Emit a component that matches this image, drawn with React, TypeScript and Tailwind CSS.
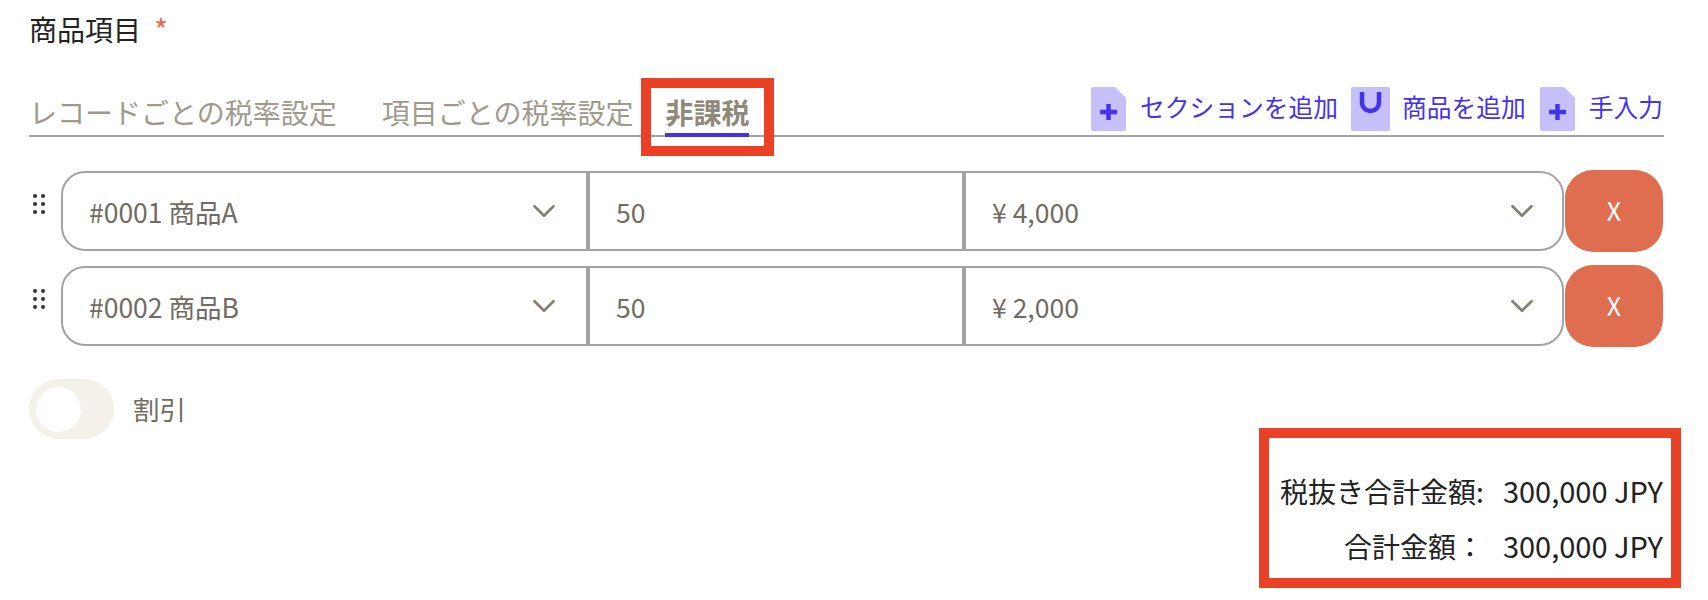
import { ChevronDown } from "lucide-react";

const FONT = "font-['Noto_Sans_CJK_JP','Noto_Sans',sans-serif]";

function FileIcon({ plus }: { plus?: boolean }) {
	if (plus) {
		return (
			<svg className="shrink-0" width="35" height="44" viewBox="0 0 35 44">
				<path d="M2 0H24L35 11V42a2 2 0 0 1-2 2H2a2 2 0 0 1-2-2V2a2 2 0 0 1 2-2Z" fill="#c5c0fa" />
				<path d="M17.500 17V33M9 25H26" stroke="#4433e8" strokeWidth="4.500" />
			</svg>
		);
	}
	return (
		<svg className="shrink-0" width="39" height="44" viewBox="0 0 39 44">
			<rect width="39" height="44" rx="2" fill="#c5c0fa" />
			<path d="M11 5V15.500a8.500 8.500 0 0 0 17 0V5" fill="none" stroke="#4433e8" strokeWidth="4.500" />
		</svg>
	);
}

function GripDots() {
	return (
		<div className="mt-[24px] grid h-[20px] w-[12px] grid-cols-2 gap-x-[4px] gap-y-[4px]">
			{[0, 1, 2, 3, 4, 5].map((i) => (
				<span className="h-[4px] w-[4px] rounded-full bg-[#333333]" key={i} />
			))}
		</div>
	);
}

function ItemRow({ name, qty, price }: { name: string; qty: string; price: string }) {
	return (
		<div className="flex h-[82px] items-start">
			<div className="w-[32px] pl-[4px]">
				<GripDots />
			</div>
			<div className="mt-[1px] flex h-[80px] w-[1503px] rounded-[24px] border-2 border-[#a3a3a3] text-[26.500px] text-[#716c62]">
				<div className="flex w-[523px] items-center justify-between pr-[23px] pl-[26px]">
					<span className="pt-[1px]">{name}</span>
					<ChevronDown className="text-[#858072]" size={38} strokeWidth={1.700} />
				</div>
				<div className="flex w-[376px] items-center border-l-4 border-[#a3a3a3] pl-[26px]">
					<span className="pt-[1px]">{qty}</span>
				</div>
				<div className="flex flex-1 items-center justify-between border-l-4 border-[#a3a3a3] pr-[21px] pl-[26px]">
					<span className="pt-[1px]">{price}</span>
					<ChevronDown className="text-[#858072]" size={38} strokeWidth={1.700} />
				</div>
			</div>
			<button className="ml-[1px] flex h-[82px] w-[98px] items-center justify-center rounded-[28px] bg-[#df6d50] text-[25px] text-white" type="button">
				X
			</button>
		</div>
	);
}

export default function App() {
	return (
		<div className={`${FONT} h-[600px] w-[1708px] overflow-hidden bg-white pt-[10px] pr-[29px] pl-[29px]`}>
			<div className="flex h-[38px] items-center gap-[13px] text-[28px] text-[#222222]">
				<span>商品項目</span>
				<span className="text-[30px] text-[#df6d50]">*</span>
			</div>

			{/* タブ */}
			<div className="mt-[31px] flex h-[58px] w-[1635px] items-end justify-between border-b-2 border-[#a3a3a3]">
				<div className="flex text-[28px] text-[#a09a8c]">
					<span className="pb-[2px]">レコードごとの税率設定</span>
					<span className="ml-[45px] pb-[2px]">項目ごとの税率設定</span>
					<span className="relative ml-[32px] -mb-[2px] border-b-4 border-[#4433e8] font-bold text-[#8f897a]">
						非課税
						<span className="absolute -top-[13px] -right-[25px] -bottom-[23px] -left-[24px] border-[10px] border-[#ea4126]" />
					</span>
				</div>
				<div className="flex items-center pr-[1px] pb-[4px] text-[24.750px] text-[#4433e8]">
					<FileIcon plus />
					<span className="ml-[14px] pb-[4px]">セクションを追加</span>
					<span className="ml-[13px]">
						<FileIcon />
					</span>
					<span className="ml-[12px] pb-[4px]">商品を追加</span>
					<span className="ml-[14px]">
						<FileIcon plus />
					</span>
					<span className="ml-[14px] pb-[4px]">手入力</span>
				</div>
			</div>

			<div className="mt-[33px] flex w-[1635px] flex-col gap-[13px]">
				<ItemRow name="#0001 商品A" price="¥ 4,000" qty="50" />
				<ItemRow name="#0002 商品B" price="¥ 2,000" qty="50" />
			</div>

			<div className="mt-[32px] flex items-center gap-[19px]">
				<div className="flex h-[60px] w-[85px] items-center rounded-full bg-[#f4f0ea] pl-[7px]">
					<span className="h-[45px] w-[45px] rounded-full bg-white" />
				</div>
				<span className="text-[26.500px] text-[#716c62]">割引</span>
			</div>

			{/* 合計 */}
			<div className="mt-[-11px] mr-[-2px] ml-auto flex h-[160px] w-[422px] flex-col justify-end gap-[12px] border-[10px] border-[#ea4126] pr-[8px] pb-[11px] text-[28px] text-[#222222]">
				<div className="flex h-[43px] items-center justify-end">
					<span>税抜き合計金額:</span>
					<span className="ml-[19px] text-[29px]">300,000 JPY</span>
				</div>
				<div className="flex h-[43px] items-center justify-end">
					<span>合計金額：</span>
					<span className="ml-[19px] text-[29px]">300,000 JPY</span>
				</div>
			</div>
		</div>
	);
}
